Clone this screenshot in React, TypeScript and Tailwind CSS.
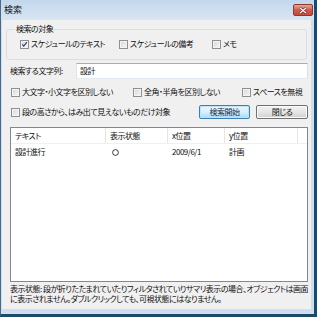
import React from "react";

function Box({ checked }: { checked?: boolean }) {
  return (
    <span className="w-[9px] h-[9px] shrink-0 border border-[#8e8f8f] bg-gradient-to-br from-[#d3d6da] to-[#f7f7f7] shadow-[inset_0_0_0_1px_#f4f4f4] flex items-center justify-center">
      {checked && (
        <svg width="9" height="9" viewBox="0 0 9 9" className="block">
          <path d="M1.6 4.4 L3.5 6.6 L7.6 1.6" fill="none" stroke="#2f3f62" strokeWidth="1.5" />
        </svg>
      )}
    </span>
  );
}

function Check({ label, checked, w }: { label: string; checked?: boolean; w?: string }) {
  return (
    <div className={`flex items-center gap-[2px] h-[10px] leading-[10px] ${w ?? ""}`}>
      <Box checked={checked} />
      <span className="whitespace-nowrap">{label}</span>
    </div>
  );
}

export default function App() {
  return (
    <div className="w-[317px] h-[317px] bg-[#cfdeee] border-l border-l-[#48698a] border-r-[3px] border-r-[#1e4a69] border-b-[3px] border-b-[#1e4a69] flex flex-col text-[8px] tracking-[-0.5px] text-[#111111] font-['Noto_Sans_CJK_JP',sans-serif] [font-feature-settings:'palt'] overflow-hidden">
      {/* title bar */}
      <div className="h-[20px] shrink-0 bg-gradient-to-b from-[#c3d7ec] to-[#d8e6f3] flex items-start">
        <span className="ml-[3px] mt-[5px] text-[9px] tracking-normal leading-[10px]">検索</span>
        <div className="ml-auto mr-[1px] mt-[4px] w-[20px] h-[12px] rounded-[2px] border border-[#8a3a33] bg-gradient-to-b from-[#e6a596] via-[#d0594b] to-[#c8463a] flex items-center justify-center">
          <svg width="8" height="7" viewBox="0 0 8 7">
            <path d="M1 1 L7 6 M7 1 L1 6" stroke="#6b2520" strokeWidth="2.4" />
            <path d="M1 1 L7 6 M7 1 L1 6" stroke="#ffffff" strokeWidth="1.3" />
          </svg>
        </div>
      </div>

      {/* content */}
      <div className="flex-1 ml-[1px] mr-[3px] mb-[5px] bg-[#f0f0f0] flex flex-col">
        <fieldset className="mt-[4px] mx-[4px] border border-[#d5dfe5] rounded-[3px] pl-[8px] pr-[8px] pb-[10px]">
          <legend className="px-[1px] leading-[10px]">検索の対象</legend>
          <div className="flex items-center ml-[5px] mt-[5px]">
            <Check label="スケジュールのテキスト" checked w="w-[99px]" />
            <Check label="スケジュールの備考" w="w-[93px]" />
            <Check label="メモ" />
          </div>
        </fieldset>

        <div className="flex items-center mt-[3px] pl-[8px] pr-[3px] h-[16px]">
          <span className="w-[66px] whitespace-nowrap">検索する文字列:</span>
          <div className="flex-1 h-[16px] bg-white border border-[#abadb3] border-r-[#dbdfe6] border-b-[#e3e9ef] border-l-[#e2e3ea] pl-[3px] flex items-center">
            設計
          </div>
        </div>

        <div className="flex items-center mt-[8px] pl-[9px]">
          <Check label="大文字・小文字を区別しない" w="w-[122px]" />
          <Check label="全角・半角を区別しない" w="w-[109px]" />
          <Check label="スペースを無視" />
        </div>

        <div className="flex items-center mt-[8px] pl-[9px] pr-[3px] h-[14px]">
          <div className="flex-1">
            <Check label="段の高さから、はみ出て見えないものだけ対象" />
          </div>
          <button className="w-[51px] h-[14px] rounded-[2px] border border-[#3c7fb1] bg-gradient-to-b from-[#eaf6fd] via-[#d9f0fc] to-[#a7d9f5] shadow-[inset_0_0_0_1px_#bfe4f8] leading-none text-[#1b2b45] flex items-center justify-center">
            検索開始
          </button>
          <button className="ml-[6px] w-[52px] h-[14px] rounded-[2px] border border-[#707070] bg-gradient-to-b from-[#f2f2f2] via-[#e6e6e6] to-[#d0d0d0] shadow-[inset_0_0_0_1px_#fbfbfb] leading-none flex items-center justify-center">
            閉じる
          </button>
        </div>

        <div className="flex-1 mt-[8px] ml-[8px] mr-[3px] border border-[#828790] bg-white flex flex-col">
          <div className="flex h-[16px] leading-[16px] border-b border-[#eef0f3]">
            <div className="w-[95px] pl-[4px] border-r border-[#e5e5e5]">テキスト</div>
            <div className="w-[62px] pl-[4px] border-r border-[#e5e5e5]">表示状態</div>
            <div className="w-[57px] pl-[4px] border-r border-[#e5e5e5]">x位置</div>
            <div className="w-[73px] pl-[4px] border-r border-[#e5e5e5]">y位置</div>
          </div>
          <div className="flex h-[16px] leading-[16px] items-center">
            <div className="w-[95px] pl-[4px]">設計進行</div>
            <div className="w-[62px] pl-[6px] flex items-center">
              <svg width="7" height="7" viewBox="0 0 7 7" className="block">
                <circle cx="3.5" cy="3.5" r="2.9" fill="none" stroke="#222222" strokeWidth="0.9" />
              </svg>
            </div>
            <div className="w-[57px] pl-[4px]">2009/6/1</div>
            <div className="w-[73px] pl-[4px]">計画</div>
          </div>
        </div>

        <div className="mt-[2px] pl-[8px] pr-[1px] pb-[5px] leading-[10px] whitespace-nowrap">
          <div>表示状態: 段が折りたたまれていたりフィルタされていりサマリ表示の場合、オブジェクトは画面</div>
          <div>に表示されません。ダブルクリックしても、可視状態にはなりません。</div>
        </div>
      </div>
    </div>
  );
}
